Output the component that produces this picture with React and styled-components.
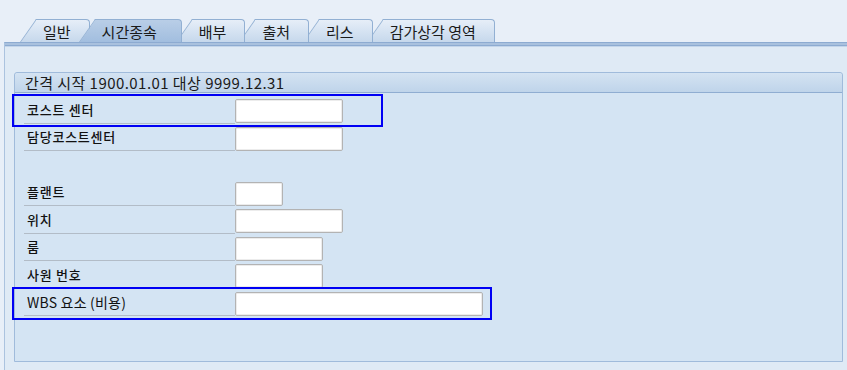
import styled, { createGlobalStyle } from "styled-components"

const GlobalStyle = createGlobalStyle`
    body {
        margin: 0;
        background: #e8eff8;
        font-family: "Noto Sans CJK KR", "Noto Sans", sans-serif;
        color: #1c1c1c;
    }
`

const tabs = ["일반", "시간종속", "배부", "출처", "리스", "감가상각 영역"]

const fields = [
    { label: "코스트 센터", width: 108, mark: 371 },
    { label: "담당코스트센터", width: 108 },
    null,
    { label: "플랜트", width: 48 },
    { label: "위치", width: 108 },
    { label: "룸", width: 88 },
    { label: "사원 번호", width: 88 },
    { label: "WBS 요소 (비용)", width: 248, mark: 480, big: true },
]

export default function App() {
    return (
        <Screen>
            <GlobalStyle />
            <TabStrip>
                {tabs.map((name, i) => (
                    <Tab key={name} $index={i} $active={i === 1}>
                        {name}
                    </Tab>
                ))}
            </TabStrip>
            <Content>
                <GroupBox>
                    <GroupHeader>간격 시작 1900.01.01 대상 9999.12.31</GroupHeader>
                    <Fields>
                        {fields.map((f, i) => {
                            if (!f) return <Row key={i} />
                            return (
                                <Row key={i}>
                                    <Label $big={f.big}>{f.label}</Label>
                                    <Input $width={f.width} />
                                    {f.mark && <Mark $width={f.mark} />}
                                </Row>
                            )
                        })}
                    </Fields>
                </GroupBox>
            </Content>
        </Screen>
    )
}

const Screen = styled.div`
    width: 847px;
    height: 370px;
    display: flex;
    flex-direction: column;
    overflow: hidden;
`
const TabStrip = styled.div`
    display: flex;
    padding: 19px 0 0 20px;
    height: 23px;
`
const Tab = styled.div`
    position: relative;
    z-index: ${p => p.$active ? 20 : 10 - p.$index};
    height: 23px;
    margin-left: ${p => p.$index === 0 ? 0 : p.$active ? -11 : -6}px;
    padding: 1px ${p => p.$active ? 25 : 19}px 0 23px;
    box-sizing: border-box;
    display: flex;
    align-items: center;
    font-size: 15px;
    white-space: pre;
    color: #1a1a1a;

    &::before {
        content: "";
        position: absolute;
        left: 0;
        bottom: 0;
        width: 30px;
        height: 100%;
        box-sizing: border-box;
        border: 1px solid #92b0d3;
        border-right: none;
        border-bottom: none;
        background: ${p => p.$active
            ? "linear-gradient(#b9cee7, #a2bedf)"
            : "linear-gradient(#e6eef8, #c6d8ec)"};
        transform: skewX(-35deg);
        transform-origin: bottom left;
        z-index: -1;
    }
    &::after {
        content: "";
        position: absolute;
        left: 16px;
        right: 0;
        top: 0;
        bottom: 0;
        border: 1px solid #92b0d3;
        border-left: none;
        border-bottom: none;
        border-radius: 0 4px 0 0;
        background: ${p => p.$active
            ? "linear-gradient(#b9cee7, #a2bedf)"
            : "linear-gradient(#e6eef8, #c6d8ec)"};
        z-index: -1;
    }
`
const Content = styled.div`
    flex: 1;
    display: flex;
    margin-left: 4px;
    border-left: 1px solid #abc3df;
    border-top: 1px solid #8dabd1;
    box-shadow: inset 0 1px #a9c1de, inset 0 2px #a9c1de, inset 0 3px #8dabd1, inset 0 4px #c3d5ea;
    background: #dfeaf5;
    padding: 29px 4px 8px 9px;
`
const GroupBox = styled.div`
    flex: 1;
    display: flex;
    flex-direction: column;
    border: 1px solid #a0bbdb;
    border-radius: 3px 3px 0 0;
    background: #d4e4f3;
`
const GroupHeader = styled.div`
    height: 20px;
    box-sizing: border-box;
    border-bottom: 1px solid #8fadd1;
    border-radius: 3px 3px 0 0;
    background: linear-gradient(#d4e3f2, #bfd4ea);
    padding-left: 10px;
    font-size: 15px;
    letter-spacing: 0.45px;
    line-height: 19px;
    color: #1a1a1a;
`
const Fields = styled.div`
    padding-top: 3px;
`
const Row = styled.div`
    position: relative;
    display: flex;
    height: 27.5px;
    padding-left: 9px;
`
const Label = styled.div`
    width: 211px;
    box-sizing: border-box;
    border-bottom: 1px solid #b2bcc7;
    padding: 0 0 ${p => p.$big ? 3 : 4}px 3px;
    display: flex;
    align-items: flex-end;
    font-size: ${p => p.$big ? 14 : 13}px;
    font-weight: ${p => p.$big ? 400 : 500};
    letter-spacing: ${p => p.$big ? 0.2 : 0.75}px;
    color: #111;
`
const Input = styled.div`
    width: ${p => p.$width}px;
    height: 24px;
    margin-top: 3px;
    box-sizing: border-box;
    border: 1px solid #b3b3b3;
    border-radius: 2px;
    background: #fff;
    box-shadow: inset 0 0 0 1px #ececec;
`
const Mark = styled.div`
    position: absolute;
    left: -3px;
    top: -2px;
    width: ${p => p.$width}px;
    height: 33px;
    box-sizing: border-box;
    border: 2px solid #0000f4;
    pointer-events: none;
`
